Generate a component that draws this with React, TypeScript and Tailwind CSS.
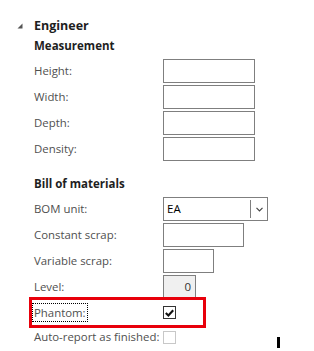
import React from "react";

const font = { fontFamily: '"Open Sans", "Noto Sans", sans-serif' };

function Field({ label, children }: { label: string; children?: React.ReactNode }) {
  return (
    <div className="flex h-[26px] items-center">
      <div className="w-[129px] whitespace-nowrap text-[11.4px] text-[#4f4f4f]">{label}</div>
      {children}
    </div>
  );
}

function Box({ w }: { w: string }) {
  return <div className={`h-[24px] border border-[#7f7f7f] bg-white ${w}`} />;
}

function Checkbox({ checked }: { checked?: boolean }) {
  if (checked) {
    return (
      <div className="flex h-[13px] w-[13px] items-center justify-center border border-[#333333] bg-white">
        <svg width="9" height="8" viewBox="0 0 9 8">
          <path d="M0.8 4 L3.4 6.5 L8.2 1.3" fill="none" stroke="#111" strokeWidth="2.1" />
        </svg>
      </div>
    );
  }
  return <div className="h-[13px] w-[13px] border border-[#c8c8c8] bg-white" />;
}

export default function App() {
  return (
    <div className="relative h-[351px] w-[314px] overflow-hidden bg-white" style={font}>
      <div className="pl-[34px] pt-[16px]">
        <div className="relative flex h-[20px] items-center text-[12.5px] font-bold text-[#1e1e1e]">
          <svg className="absolute left-[-17px] top-[7px]" width="6" height="6" viewBox="0 0 6 6">
            <polygon points="5.5,0.5 5.5,5.5 0.5,5.5" fill="#555" />
          </svg>
          Engineer
        </div>
        <div className="flex h-[20px] items-center text-[11.5px] font-bold text-[#1e1e1e]">Measurement</div>
        <div className="mt-[2px]">
          <Field label="Height:"><Box w="w-[92px]" /></Field>
          <Field label="Width:"><Box w="w-[92px]" /></Field>
          <Field label="Depth:"><Box w="w-[92px]" /></Field>
          <Field label="Density:"><Box w="w-[92px]" /></Field>
        </div>
        <div className="mt-[12px] flex h-[20px] items-center text-[11.5px] font-bold text-[#1e1e1e]">
          Bill of materials
        </div>
        <div className="mt-[2px]">
          <Field label="BOM unit:">
            <div className="flex h-[24px] w-[105px] items-stretch border border-[#7f7f7f] bg-white">
              <div className="flex flex-1 items-center pl-[3px] text-[11.5px] text-black">EA</div>
              <div className="my-[2px] w-px bg-[#7f7f7f]" />
              <div className="flex w-[16px] items-center justify-center">
                <svg width="7" height="5" viewBox="0 0 7 5">
                  <path d="M0.5 0.8 L3.5 3.8 L6.5 0.8" fill="none" stroke="#444" strokeWidth="1.2" />
                </svg>
              </div>
            </div>
          </Field>
          <Field label="Constant scrap:"><Box w="w-[81px]" /></Field>
          <Field label="Variable scrap:"><Box w="w-[51px]" /></Field>
          <Field label="Level:">
            <div className="flex h-[24px] w-[33px] items-center justify-end border border-[#7f7f7f] bg-[#f0f0f0] pr-[4px] text-[11.5px] text-[#333333]">
              0
            </div>
          </Field>
          <div className="relative flex h-[25px] items-center">
            <div className="w-[129px] text-[11.4px] text-[#4f4f4f]">
              <span className="outline outline-1 outline-dotted outline-offset-1 outline-black">Phantom:</span>
            </div>
            <Checkbox checked />
            <div className="absolute left-[-5px] top-[-3px] h-[31px] w-[177px] border-[3px] border-[#e8000b]" />
          </div>
          <div className="flex h-[24px] items-center">
            <div className="w-[129px] whitespace-nowrap text-[11.4px] text-[#4f4f4f]">Auto-report as finished:</div>
            <Checkbox />
          </div>
        </div>
      </div>
      <div className="absolute left-[277px] top-[337px] h-[11px] w-[3px] bg-black" />
    </div>
  );
}
